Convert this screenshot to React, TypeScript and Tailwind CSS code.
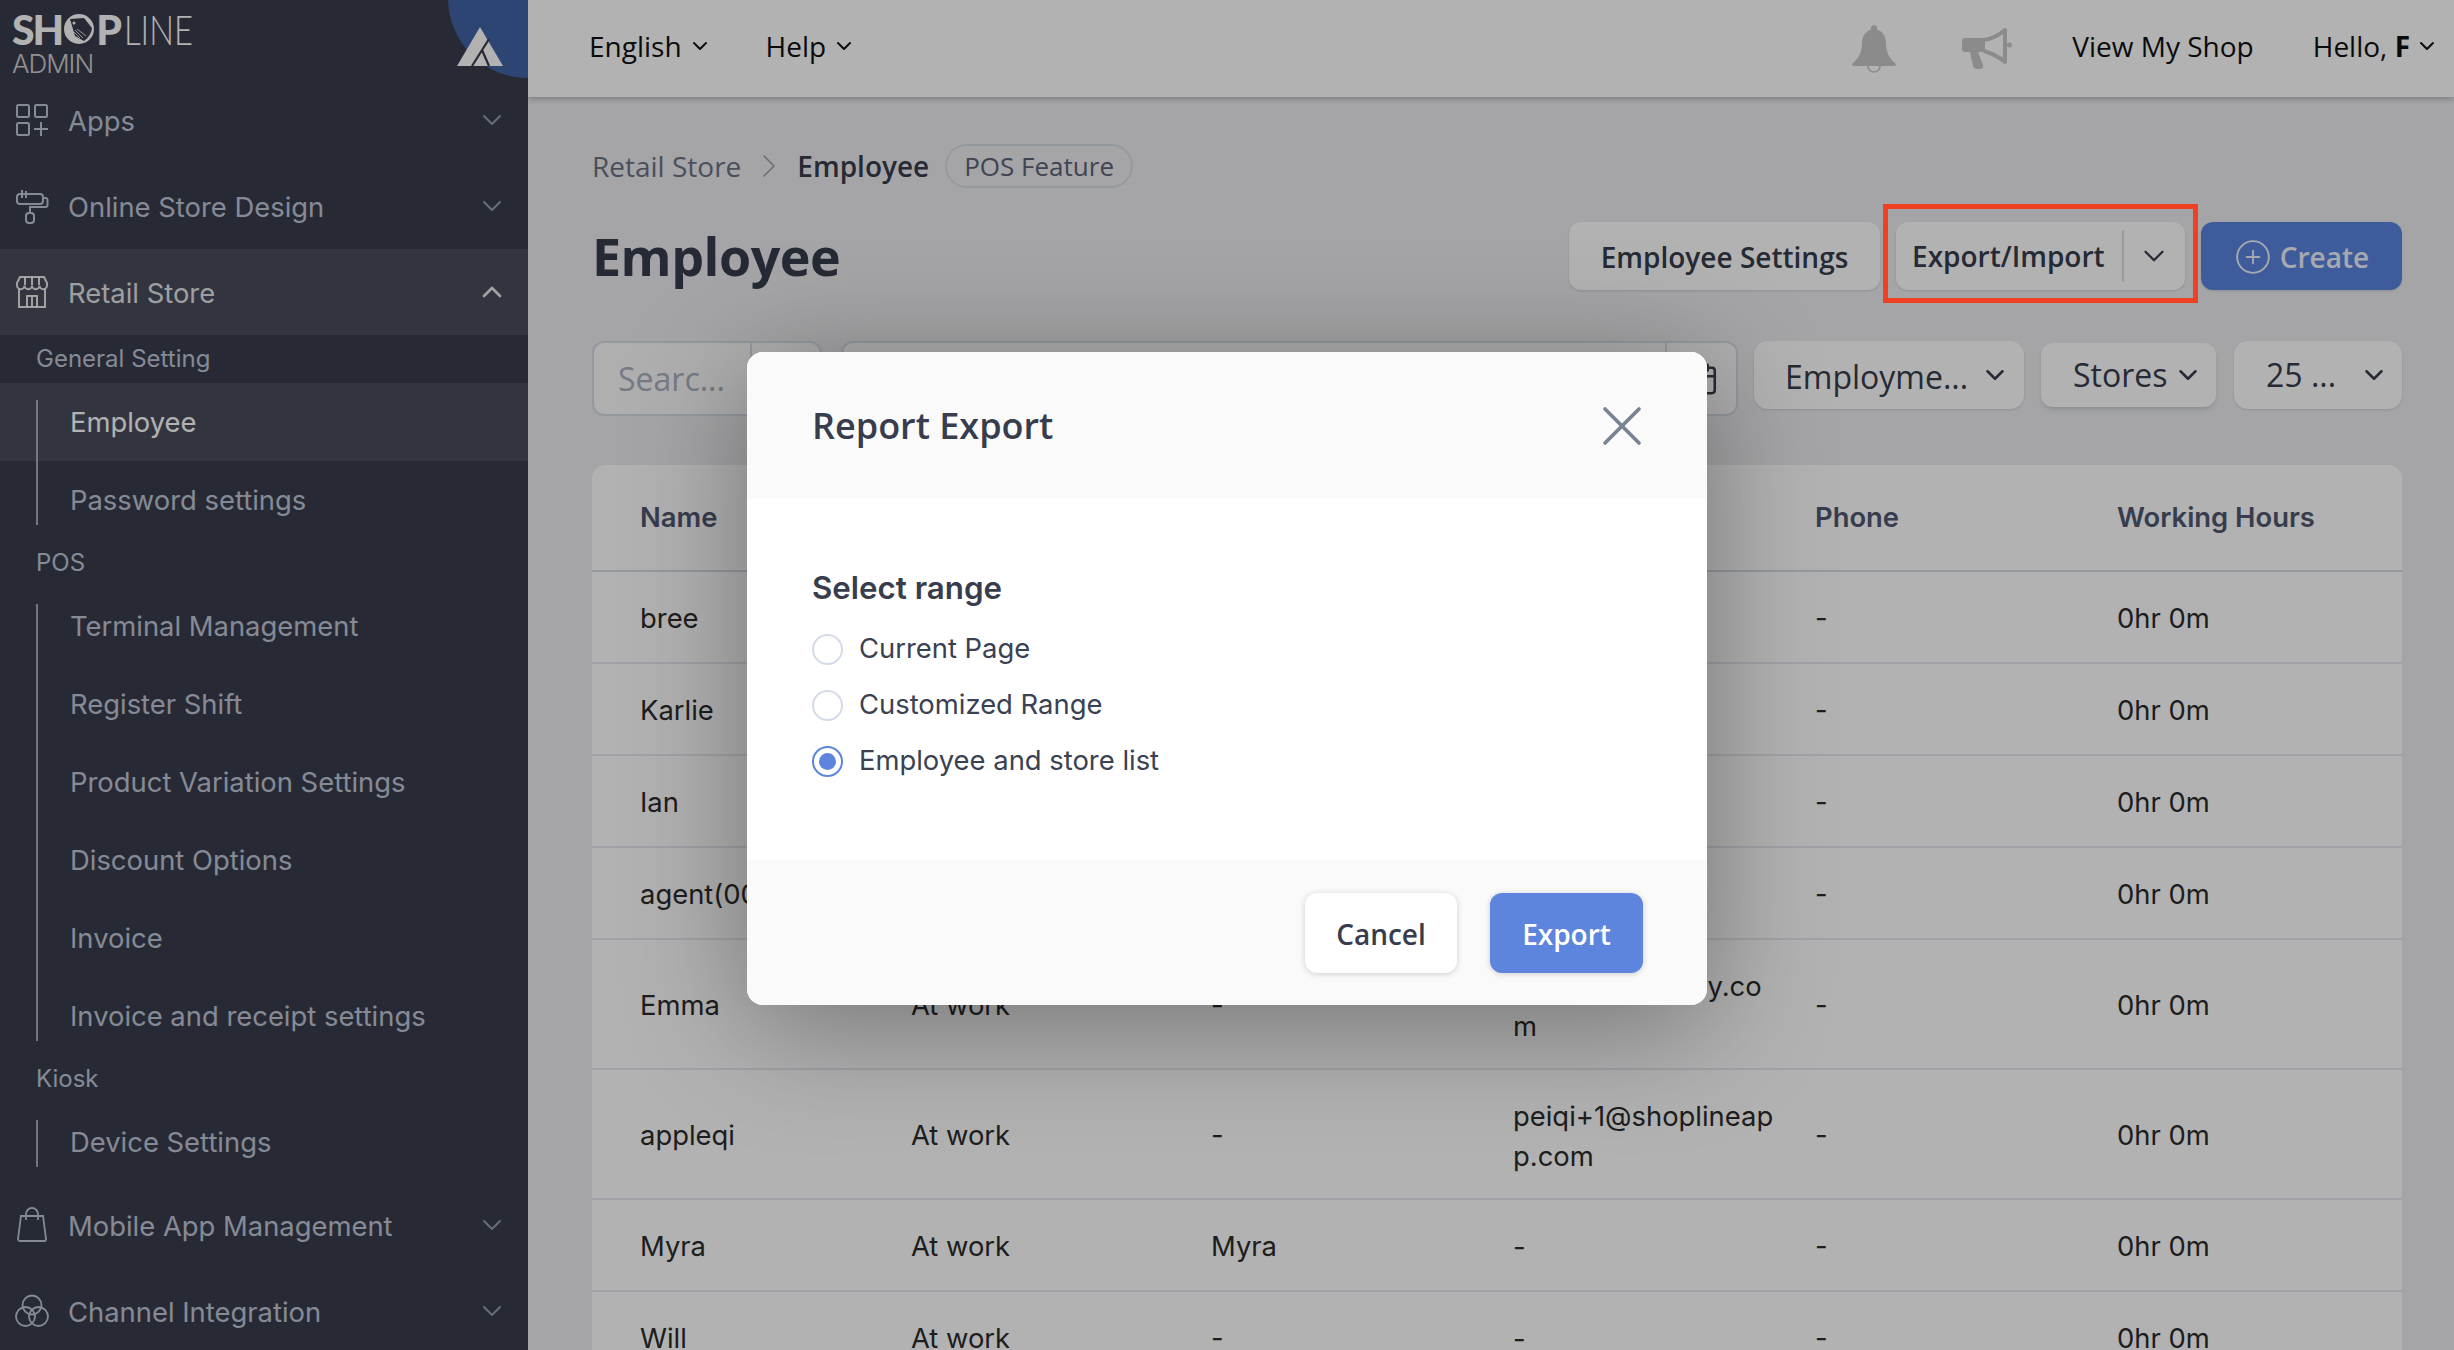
import { ChevronDown, ChevronRight, ChevronUp, CirclePlus, Calendar, X } from "lucide-react";

const iconClass = "w-[34px] h-[34px] shrink-0";

const AppsIcon = () => (
  <svg viewBox="0 0 34 34" className={iconClass} fill="none" stroke="currentColor" strokeWidth="2">
    <rect x="2" y="2" width="12" height="12" rx="1.5" />
    <rect x="20" y="2" width="12" height="12" rx="1.5" />
    <rect x="2" y="20" width="12" height="12" rx="1.5" />
    <path d="M26 19v14M19 26h14" />
  </svg>
);

const RollerIcon = () => (
  <svg viewBox="0 0 34 36" className="w-[34px] h-[36px] shrink-0" fill="none" stroke="currentColor" strokeWidth="2">
    <rect x="2" y="6" width="26" height="10" rx="3" />
    <path d="M7 2v8M11 3v7" />
    <path d="M28 10h2.5a2 2 0 0 1 2 2v5a2 2 0 0 1-2 2H15v6" />
    <rect x="11" y="25" width="8" height="10" rx="3" />
  </svg>
);

const StoreIcon = () => (
  <svg viewBox="0 0 34 34" className={iconClass} fill="none" stroke="currentColor" strokeWidth="2">
    <path d="M5 2h24l3 6v2.500a3.500 3.500 0 0 1-7.500 0 3.700 3.700 0 0 1-7.500 0 3.700 3.700 0 0 1-7.500 0 3.500 3.500 0 0 1-7.500 0V8z" />
    <path d="M10 2v8M17 2v8M24 2v8" />
    <path d="M4 14v18h26V14" />
    <path d="M12 32V21h10v11M17 21v11" />
  </svg>
);

const BagIcon = () => (
  <svg viewBox="0 0 34 36" className="w-[34px] h-[36px] shrink-0" fill="none" stroke="currentColor" strokeWidth="1.800">
    <path d="M6 9h22l3 23a2 2 0 0 1-2 2H5a2 2 0 0 1-2-2z" />
    <path d="M11 13V7a6 6 0 0 1 12 0v6" />
  </svg>
);

const ChannelIcon = () => (
  <svg viewBox="0 0 34 34" className={iconClass} fill="none" stroke="currentColor" strokeWidth="1.800">
    <circle cx="17" cy="11" r="9.500" />
    <circle cx="10.500" cy="22.500" r="9.500" />
    <circle cx="23.500" cy="22.500" r="9.500" />
  </svg>
);

const LogoO = () => (
  <svg viewBox="0 0 30 30" className="w-[30px] h-[30px] mx-[2px] shrink-0">
    <circle cx="15" cy="15" r="15" fill="#fff" />
    <path d="M6 5 L20 4 L28 14 Q27 22 20 27 L11 22 Z" fill="#383d4d" />
    <circle cx="10" cy="9" r="1.500" fill="#fff" />
    <path d="M11 16l8 8M10 18l6 6M13 15l9 7" stroke="#fff" strokeWidth="0.800" />
  </svg>
);

const BellIcon = () => (
  <svg viewBox="0 0 44 48" className="w-[44px] h-[48px]" fill="#c7c7c7">
    <path d="M22 0a3.500 3.500 0 0 1 3 4.500C30 6 34 11 34 18c0 9 3 15 10 21 0 1-1 2-2 2H2c-1 0-2-1-2-2 7-6 10-12 10-21 0-7 4-12 9-13.500A3.500 3.500 0 0 1 22 0z" />
    <circle cx="22" cy="41" r="6" fill="none" stroke="#c7c7c7" strokeWidth="1.600" />
  </svg>
);

const MegaphoneIcon = () => (
  <svg viewBox="0 0 50 42" className="w-[50px] h-[42px]">
    <path d="M3 10h20v14H16l5 13q1 4-3 4h-3q-3 0-4-3l-3-14H3q-3 0-3-3V13q0-3 3-3z" fill="#c7c7c7" />
    <path d="M22 12 Q34 10 43 2 V34 Q33 26 22 23" fill="none" stroke="#c7c7c7" strokeWidth="4" strokeLinejoin="round" />
    <circle cx="47.500" cy="17" r="2.500" fill="#c7c7c7" />
  </svg>
);

const topItems = [
  { label: "Apps", icon: AppsIcon },
  { label: "Online Store Design", icon: RollerIcon },
];

const groups = [
  { title: "General Setting", items: ["Employee", "Password settings"] },
  {
    title: "POS",
    items: [
      "Terminal Management",
      "Register Shift",
      "Product Variation Settings",
      "Discount Options",
      "Invoice",
      "Invoice and receipt settings",
    ],
  },
  { title: "Kiosk", items: ["Device Settings"] },
];

const bottomItems = [
  { label: "Mobile App Management", icon: BagIcon },
  { label: "Channel Integration", icon: ChannelIcon },
];

const rows = [
  { name: "bree", status: "At work", nick: "-", email: "-", h: "h-[92px]" },
  { name: "Karlie", status: "At work", nick: "-", email: "-", h: "h-[92px]" },
  { name: "Ian", status: "At work", nick: "-", email: "-", h: "h-[92px]" },
  { name: "agent(001)", status: "At work", nick: "-", email: "-", h: "h-[92px]" },
  { name: "Emma", status: "At work", nick: "-", email: "mm@shoplinery.com", h: "h-[130px]" },
  { name: "appleqi", status: "At work", nick: "-", email: "peiqi+1@shoplineapp.com", h: "h-[130px]" },
  { name: "Myra", status: "At work", nick: "Myra", email: "-", h: "h-[92px]" },
  { name: "Will", status: "At work", nick: "-", email: "-", h: "h-[92px]" },
];

const cols = "grid grid-cols-[295px_300px_302px_302px_302px_1fr] items-center";

const Sidebar = () => (
  <aside className="w-[528px] shrink-0 h-full overflow-hidden bg-[#383d4d] text-[#c0c6d6] font-['Inter',sans-serif] text-[27.4px] relative">
    <div className="absolute -top-[82px] left-[448px] w-[160px] h-[160px] rounded-full bg-[#4163a5]" />
    <svg viewBox="0 0 46 39" className="absolute left-[457px] top-[27px] w-[46px] h-[39px]">
      <path d="M23 0 L46 39 H0 Z" fill="#fff" />
      <path d="M32 12 L15 39 M25 23 L32 39" fill="none" stroke="#383d4d" strokeWidth="2.200" />
    </svg>
    <div className="h-[77px] pl-[12px] pt-[9px] relative text-white">
      <div className="flex items-center h-[40px] font-['Lato',sans-serif] text-[41px] leading-none">
        <span className="font-black tracking-[-2px]">SH</span>
        <LogoO />
        <span className="font-black tracking-[-1px]">P</span>
        <span className="font-light ml-[3px] inline-block origin-left scale-x-[0.8]">LINE</span>
      </div>
      <div className="text-[26px] leading-[26px] pt-[2px] font-light text-[#d0d0d0] tracking-[-1px]">ADMIN</div>
    </div>

    {topItems.map((item) => (
      <div key={item.label} className="h-[86px] flex items-center pl-[15px] pr-[20px]">
        <item.icon />
        <span className="ml-[19px] flex-1 pt-[3px]">{item.label}</span>
        <ChevronDown size={32} strokeWidth={1.500} className="opacity-70" />
      </div>
    ))}

    <div className="h-[86px] flex items-center pl-[15px] pr-[20px] bg-[#484d5c] text-[#ffffffdd]">
      <StoreIcon />
      <span className="ml-[19px] flex-1 pt-[3px]">Retail Store</span>
      <ChevronUp size={32} strokeWidth={2} />
    </div>

    {groups.map((group) => (
      <div key={group.title}>
        <div className="h-[48px] flex items-center pl-[36px] text-[24px]">{group.title}</div>
        <div className="relative">
          <div className="absolute left-[36px] top-[17px] bottom-[14px] w-[2px] bg-[#c0c6d6] opacity-80" />
          {group.items.map((label) => (
            <div
              key={label}
              className={
                label === "Employee"
                  ? "h-[78px] flex items-center pl-[70px] pt-[2px] bg-[#484d5c] text-white"
                  : "h-[78px] flex items-center pl-[70px] pt-[2px]"
              }
            >
              {label}
            </div>
          ))}
        </div>
      </div>
    ))}

    <div className="pt-[1px]">
      {bottomItems.map((item) => (
        <div key={item.label} className="h-[86px] flex items-center pl-[15px] pr-[20px]">
          <item.icon />
          <span className="ml-[19px] flex-1 pt-[3px]">{item.label}</span>
          <ChevronDown size={32} strokeWidth={1.500} className="opacity-70" />
        </div>
      ))}
    </div>
  </aside>
);

const TopBar = () => (
  <header className="h-[97px] shrink-0 bg-white shadow-[0_2px_6px_rgba(0,0,0,0.25)] flex items-center pl-[61px] pr-[15px] text-[28px] text-[#111] relative">
    <div className="flex items-center pb-[5px]">
      <span>English</span>
      <ChevronDown size={24} strokeWidth={2} className="ml-[6px]" />
      <span className="ml-[54px]">Help</span>
      <ChevronDown size={24} strokeWidth={2} className="ml-[6px]" />
    </div>
    <div className="flex-1" />
    <BellIcon />
    <div className="ml-[66px]">
      <MegaphoneIcon />
    </div>
    <div className="flex items-center pb-[5px]">
      <span className="ml-[60px]">View My Shop</span>
      <span className="ml-[59px]">
        Hello, <b>F</b>
      </span>
      <ChevronDown size={24} strokeWidth={2} className="ml-[5px]" />
    </div>
  </header>
);

const Filters = () => (
  <div className="flex items-start mt-[51px] text-[#373d4d]">
    <div className="w-[230px] h-[75px] rounded-[12px] border-2 border-[#d5dbe6] bg-white/80 flex items-center shrink-0">
      <span className="flex-1 pl-[24px] text-[32px] text-[#a9b0c0]">Searc...</span>
      <div className="w-[70px] h-full border-l-2 border-[#d5dbe6]" />
    </div>
    <div className="w-[897px] h-[75px] ml-[19px] rounded-[12px] border-2 border-[#d5dbe6] bg-white/80 flex justify-end shrink-0">
      <div className="w-[71px] h-full border-l-2 border-[#d5dbe6] flex items-center justify-center">
        <Calendar size={34} strokeWidth={1.800} />
      </div>
    </div>
    <div className="w-[270px] h-[68px] ml-[16px] rounded-[14px] bg-white shadow-sm flex items-center pl-[31px] text-[32px] shrink-0">
      <span className="flex-1 pt-[3px]">Employme...</span>
      <ChevronDown size={30} strokeWidth={2} className="mr-[14px]" />
    </div>
    <div className="w-[175px] h-[64px] mt-[2px] ml-[17px] rounded-[12px] bg-white shadow-md flex items-center pl-[32px] text-[32px] shrink-0">
      <span className="flex-1">Stores</span>
      <ChevronDown size={30} strokeWidth={2} className="mr-[13px]" />
    </div>
    <div className="w-[168px] h-[68px] ml-[18px] rounded-[14px] bg-white shadow-sm flex items-center pl-[32px] text-[32px] shrink-0">
      <span className="flex-1">25 ...</span>
      <ChevronDown size={30} strokeWidth={2} className="mr-[13px]" />
    </div>
  </div>
);

const EmployeeTable = () => (
  <div className="mt-[49px] rounded-t-[14px] bg-white font-['Inter',sans-serif] text-[27.4px] text-[#2b2b2b]">
    <div className={`${cols} h-[107px] pt-[1px] border-b-2 border-[#d5dbe6] font-semibold text-[#4f5870]`}>
      <div className="pl-[48px]">Name</div>
      <div className="pl-[24px]">Status</div>
      <div className="pl-[24px]">Nickname</div>
      <div className="pl-[24px]">Email</div>
      <div className="pl-[24px]">Phone</div>
      <div className="pl-[24px]">Working Hours</div>
    </div>
    {rows.map((row) => (
      <div key={row.name} className={`${cols} ${row.h} pt-[3px] border-b-2 border-[#e6e9ef]`}>
        <div className="pl-[48px] whitespace-nowrap">{row.name}</div>
        <div className="pl-[24px]">{row.status}</div>
        <div className="pl-[24px]">{row.nick}</div>
        <div className="pl-[24px] pr-[10px] break-all leading-[40px]">{row.email}</div>
        <div className="pl-[24px]">-</div>
        <div className="pl-[24px]">0hr 0m</div>
      </div>
    ))}
  </div>
);

const Radio = ({ label, checked }: { label: string; checked?: boolean }) => (
  <div className="flex items-center h-[56px]">
    <div
      className={
        checked
          ? "w-[31px] h-[31px] rounded-full border-2 border-[#5d85de] flex items-center justify-center"
          : "w-[31px] h-[31px] rounded-full border-2 border-[#d5dce8]"
      }
    >
      {checked && <div className="w-[17px] h-[17px] rounded-full bg-[#5d85de]" />}
    </div>
    <span className="ml-[16px] font-['Inter',sans-serif] text-[27.4px] text-[#3a4152]">{label}</span>
  </div>
);

const ExportModal = () => (
  <div className="absolute left-[747px] top-[352px] w-[960px] h-[653px] rounded-[16px] overflow-hidden bg-white flex flex-col shadow-[0_20px_120px_rgba(0,0,0,0.35)]">
    <div className="h-[147px] bg-[#fafafa] flex items-center justify-between pl-[65px] pr-[51px]">
      <h2 className="text-[36px] font-semibold text-[#373d4d]">Report Export</h2>
      <X size={68} strokeWidth={1.300} className="text-[#7a8394]" />
    </div>
    <div className="flex-1 pl-[65px] pt-[68px]">
      <div className="text-[31.300px] font-semibold text-[#373d4d] font-['Inter',sans-serif] leading-[42px] mb-[12px]">Select range</div>
      <Radio label="Current Page" />
      <Radio label="Customized Range" />
      <Radio label="Employee and store list" checked />
    </div>
    <div className="h-[145px] bg-[#fafafa] flex justify-end items-start pt-[33px] pr-[64px] gap-[33px]">
      <button className="w-[152px] h-[80px] pt-[2px] rounded-[12px] bg-white shadow-[0_1px_6px_rgba(0,0,0,0.18)] text-[28px] font-semibold text-[#373d4d]">
        Cancel
      </button>
      <button className="w-[153px] h-[80px] pt-[2px] rounded-[12px] bg-[#5d85de] shadow-[0_1px_6px_rgba(0,0,0,0.18)] text-[28px] font-semibold text-white">
        Export
      </button>
    </div>
  </div>
);

export default function App() {
  return (
    <div className="relative w-full h-screen overflow-hidden flex font-['Open_Sans',sans-serif] bg-[#ecedf0]">
      <Sidebar />
      <main className="flex-1 h-full overflow-hidden flex flex-col">
        <TopBar />
        <div className="pl-[64px] pr-[52px]">
          <div className="flex items-center h-[44px] mt-[47px] text-[28px]">
            <span className="text-[#6b7285]">Retail Store</span>
            <ChevronRight size={40} strokeWidth={1} className="mx-[8px] text-[#9aa0ae]" />
            <span className="font-semibold text-[#373d4d]">Employee</span>
            <span className="ml-[16px] h-[44px] px-[17px] flex items-center rounded-full border-2 border-[#d5dbe6] text-[26px] text-[#5b6377]">
              POS Feature
            </span>
          </div>
          <div className="flex items-center mt-[34px] h-[68px]">
            <h1 className="flex-1 text-[52px] font-bold tracking-[-0.5px] text-[#373d4d]">Employee</h1>
            <button className="w-[311px] h-[68px] pt-[2px] rounded-[12px] bg-white shadow-sm text-[28px] font-semibold text-[#373d4d]">
              Employee Settings
            </button>
            <div className="w-[289px] h-[68px] ml-[16px] rounded-[12px] bg-white shadow-sm flex items-center text-[28px] font-semibold text-[#373d4d]">
              <span className="pl-[16px] w-[226px]">Export/Import</span>
              <div className="h-[52px] border-l-2 border-[#dcdfe6]" />
              <ChevronDown size={34} strokeWidth={1.600} className="ml-[13px]" />
            </div>
            <button className="w-[201px] h-[68px] ml-[16px] pt-[2px] rounded-[12px] bg-[#5a84de] shadow-sm flex items-center justify-center gap-[8px] text-[28px] font-semibold text-[#eef2fb]">
              <CirclePlus size={38} strokeWidth={1.200} />
              Create
            </button>
          </div>
          <Filters />
          <EmployeeTable />
        </div>
      </main>

      {/* Dim layer under the dialog */}
      <div className="absolute inset-0 bg-black/30" />
      <ExportModal />
      {/* Red annotation box */}
      <div className="absolute left-[1883px] top-[204px] w-[315px] h-[99px] border-[5px] border-[#f04023]" />
    </div>
  );
}
